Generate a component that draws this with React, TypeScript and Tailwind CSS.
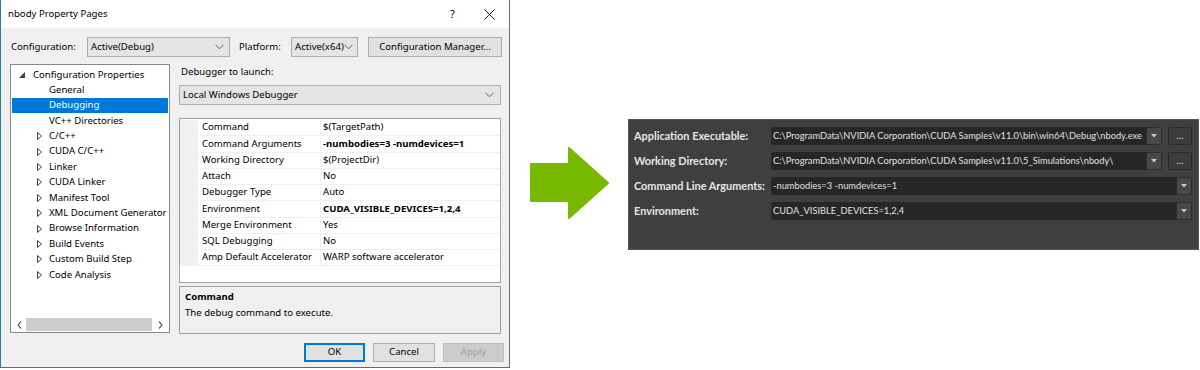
const treeItems = [
    { name: 'General', kind: 'leaf' },
    { name: 'Debugging', kind: 'leaf', selected: true },
    { name: 'VC++ Directories', kind: 'leaf' },
    { name: 'C/C++', kind: 'node' },
    { name: 'CUDA C/C++', kind: 'node' },
    { name: 'Linker', kind: 'node' },
    { name: 'CUDA Linker', kind: 'node' },
    { name: 'Manifest Tool', kind: 'node' },
    { name: 'XML Document Generator', kind: 'node' },
    { name: 'Browse Information', kind: 'node' },
    { name: 'Build Events', kind: 'node' },
    { name: 'Custom Build Step', kind: 'node' },
    { name: 'Code Analysis', kind: 'node' },
]

const props = [
    { name: 'Command', value: '$(TargetPath)' },
    { name: 'Command Arguments', value: '-numbodies=3 -numdevices=1', bold: true },
    { name: 'Working Directory', value: '$(ProjectDir)' },
    { name: 'Attach', value: 'No' },
    { name: 'Debugger Type', value: 'Auto' },
    { name: 'Environment', value: 'CUDA_VISIBLE_DEVICES=1,2,4', bold: true },
    { name: 'Merge Environment', value: 'Yes' },
    { name: 'SQL Debugging', value: 'No' },
    { name: 'Amp Default Accelerator', value: 'WARP software accelerator' },
]

const nsight = [
    { label: 'Application Executable:', value: 'C:\\ProgramData\\NVIDIA Corporation\\CUDA Samples\\v11.0\\bin\\win64\\Debug\\nbody.exe', browse: true },
    { label: 'Working Directory:', value: 'C:\\ProgramData\\NVIDIA Corporation\\CUDA Samples\\v11.0\\5_Simulations\\nbody\\', browse: true },
    { label: 'Command Line Arguments:', value: '-numbodies=3 -numdevices=1', browse: false },
    { label: 'Environment:', value: 'CUDA_VISIBLE_DEVICES=1,2,4', browse: false },
]

function Chevron() {
    return (
        <svg width="9" height="6" viewBox="0 0 9 6" className="shrink-0">
            <polyline points="0.5,0.8 4.5,4.8 8.5,0.8" fill="none" stroke="#606060" strokeWidth="1" />
        </svg>
    )
}

function Combo({ text, className }: { text: string, className: string }) {
    return (
        <div className={`flex items-center justify-between h-[20px] bg-[#e5e5e5] border border-[#adadad] pl-[3px] pr-[5px] ${className}`}>
            <span className="whitespace-nowrap">{text}</span>
            <Chevron />
        </div>
    )
}

function Collapsed() {
    return (
        <svg width="5" height="8" viewBox="0 0 5 8">
            <polygon points="0.5,0.5 4.5,4 0.5,7.5" fill="none" stroke="#404040" strokeWidth="1" />
        </svg>
    )
}

function Expanded() {
    return (
        <svg width="6" height="6" viewBox="0 0 6 6">
            <polygon points="6,0 6,6 0,6" fill="#404040" />
        </svg>
    )
}

function Dialog() {
    return (
        <div className="w-[510px] h-[368px] shrink-0 flex flex-col bg-[#f0f0f0] border-l border-l-[#2b7a99] border-r border-r-[#6b6b6b] border-b border-b-[#6b6b6b] text-[9.6px] text-black font-['Noto_Sans',sans-serif]">
            {/* title bar */}
            <div className="h-[28px] bg-white flex items-center pl-[7px]">
                <span className="flex-1">nbody Property Pages</span>
                <span className="w-[34px] text-[11px]">?</span>
                <svg width="11" height="11" viewBox="0 0 11 11" className="mr-[14px]">
                    <path d="M0.5 0.5 L10.5 10.5 M10.5 0.5 L0.5 10.5" stroke="#222" strokeWidth="1" />
                </svg>
            </div>

            {/* configuration row */}
            <div className="flex items-center mt-[9px] pl-[10px] h-[20px]">
                <span className="w-[76px]">Configuration:</span>
                <Combo text="Active(Debug)" className="w-[143px]" />
                <span className="ml-[9px] w-[52px]">Platform:</span>
                <Combo text="Active(x64)" className="w-[67px] pr-[3px]" />
                <div className="ml-[10px] w-[134px] h-[20px] bg-[#e1e1e1] border border-[#adadad] flex items-center justify-center">
                    Configuration Manager...
                </div>
            </div>

            <div className="flex mt-[7px] pl-[9px]">
                {/* tree */}
                <div className="w-[160px] h-[269px] bg-white border border-[#828790] flex flex-col">
                    <div className="flex-1 pt-[2px]">
                        <div className="flex items-center h-[15.4px] mx-px">
                            <span className="w-[21px] pl-[7px] flex items-center"><Expanded /></span>
                            <span>Configuration Properties</span>
                        </div>
                        {treeItems.map((item) => (
                            <div key={item.name} className={`flex items-center h-[15.4px] mx-px ${item.selected ? 'bg-[#0078d7] text-white' : ''}`}>
                                <span className="w-[37px] pl-[25px] flex items-center shrink-0">
                                    {item.kind === 'node' && <Collapsed />}
                                </span>
                                <span className="whitespace-nowrap">{item.name}</span>
                            </div>
                        ))}
                    </div>
                    <div className="h-[13px] mb-px mx-px flex items-center">
                        <div className="w-[14px] flex justify-center">
                            <svg width="5" height="8" viewBox="0 0 5 8"><polyline points="4,0.5 1,4 4,7.5" fill="none" stroke="#606060" strokeWidth="1.2" /></svg>
                        </div>
                        <div className="w-[126px] h-[13px] bg-[#cdcdcd]"></div>
                        <div className="flex-1 flex justify-center">
                            <svg width="5" height="8" viewBox="0 0 5 8"><polyline points="1,0.5 4,4 1,7.5" fill="none" stroke="#606060" strokeWidth="1.2" /></svg>
                        </div>
                    </div>
                </div>

                {/* right column */}
                <div className="w-[322px] ml-[9px] flex flex-col">
                    <div className="h-[16px] flex items-center pl-[2px]">Debugger to launch:</div>
                    <Combo text="Local Windows Debugger" className="mt-[5px] w-[322px] pl-[3px] pr-[6px]" />

                    <div className="mt-[13px] h-[165px] bg-white border border-[#a0a0a0] pt-px">
                        {props.map((p) => (
                            <div key={p.name} className="flex h-[16.25px]">
                                <div className="w-[18px] bg-[#f0f0f0]"></div>
                                <div className="w-[122px] pl-[4px] flex items-center whitespace-nowrap border-b border-[#f0f0f0]">{p.name}</div>
                                <div className={`flex-1 pl-[2px] flex items-center whitespace-nowrap border-l border-b border-[#f0f0f0] ${p.bold ? 'font-bold' : ''}`}>{p.value}</div>
                            </div>
                        ))}
                    </div>

                    <div className="mt-[3px] h-[48px] border border-[#a0a0a0] pl-[5px] pt-[2px] flex flex-col">
                        <div className="font-bold h-[16px] flex items-center">Command</div>
                        <div className="h-[16px] flex items-center">The debug command to execute.</div>
                    </div>
                </div>
            </div>

            {/* buttons */}
            <div className="flex justify-end gap-[8px] mt-[9px] pr-[5px]">
                <div className="w-[61px] h-[19px] bg-[#e1e1e1] border-2 border-[#0078d7] flex items-center justify-center">OK</div>
                <div className="w-[62px] h-[19px] bg-[#e1e1e1] border border-[#adadad] flex items-center justify-center">Cancel</div>
                <div className="w-[61px] h-[19px] bg-[#cccccc] border border-[#bfbfbf] text-[#a0a0a0] flex items-center justify-center">Apply</div>
            </div>
        </div>
    )
}

function Arrow() {
    return (
        <svg width="80" height="72" viewBox="0 0 80 72" className="ml-[20px] mt-[147px] shrink-0">
            <polygon points="1,17 39,17 39,1 78,36 39,71 39,54 1,54" fill="#76b900" stroke="#76b900" strokeWidth="2" strokeLinejoin="round" />
        </svg>
    )
}

function NsightPanel() {
    return (
        <div className="ml-[18px] mt-[119px] w-[571px] h-[131px] shrink-0 bg-[#3f3f3f] border border-[#565656] pt-[7px] pl-[5px] pr-[6px] font-['Lato','Noto_Sans',sans-serif]">
            {nsight.map((row) => (
                <div key={row.label} className="flex items-center h-[18px] mb-[7px]">
                    <div className="w-[137px] shrink-0 font-bold text-[10.9px] text-[#e6e6e6] whitespace-nowrap">{row.label}</div>
                    <div className="flex-1 min-w-0 h-[18px] flex bg-[#262626] rounded-[2px]">
                        <div className="flex-1 min-w-0 pl-[2px] flex items-center text-[9.3px] text-[#e0e0e0] whitespace-nowrap overflow-hidden">{row.value}</div>
                        <div className="w-[16px] h-[18px] shrink-0 bg-[#484848] border border-[#2e2e2e] rounded-[2px] flex items-center justify-center">
                            <svg width="6" height="4" viewBox="0 0 6 4"><polygon points="0,0 6,0 3,3.5" fill="#c8c8c8" /></svg>
                        </div>
                    </div>
                    {row.browse && (
                        <div className="ml-[6px] w-[24px] h-[18px] shrink-0 bg-[#3c3c3c] border border-[#2a2a2a] rounded-[2px] flex items-center justify-center text-[10px] text-[#dedede] leading-none pb-[3px]">...</div>
                    )}
                </div>
            ))}
        </div>
    )
}

export default function App() {
    return (
        <div className="w-[1200px] h-[370px] bg-white flex items-start overflow-hidden">
            <Dialog />
            <Arrow />
            <NsightPanel />
        </div>
    )
}
